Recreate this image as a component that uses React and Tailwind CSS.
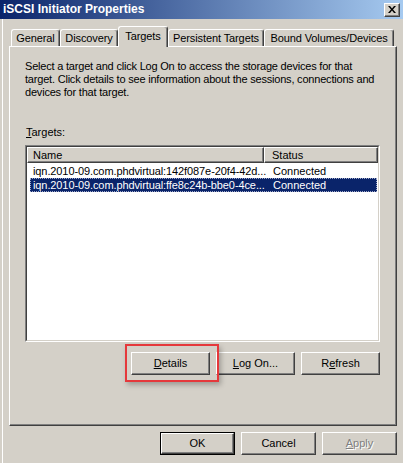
const raised =
  'border border-t-white border-l-white border-r-[#404040] border-b-[#404040] shadow-[inset_-1px_-1px_0_#808080]'

const Tab = ({ label, width, selected }) => (
  <div
    className={
      selected
        ? `relative z-10 -mb-px flex h-[21px] items-start justify-center rounded-t-[3px] border-t border-l border-r border-t-white border-l-white border-r-[#404040] bg-[#d4d0c8] pt-[3px] shadow-[inset_-1px_0_0_#808080]`
        : `flex h-[17px] items-center justify-center rounded-t-[3px] border-t border-l border-r border-t-white border-l-white border-r-[#404040] bg-[#d4d0c8] shadow-[inset_-1px_0_0_#808080]`
    }
    style={{ width }}
  >
    {label}
  </div>
)

const Button = ({ children, width = 79, isDefault, disabled }) => (
  <div className={`h-[23px] bg-[#d4d0c8] ${isDefault ? 'border border-black' : ''}`} style={{ width }}>
    <div className={`flex h-full w-full items-center justify-center ${raised}`}>
      <span className={disabled ? 'text-[#808080] [text-shadow:1px_1px_0_#fff]' : ''}>{children}</span>
    </div>
  </div>
)

const CloseIcon = () => (
  <svg width="8" height="7" viewBox="0 0 8 7">
    <path d="M0 0h2l2 2.5L6 0h2L5 3.5 8 7H6L4 4.5 2 7H0l3-3.5z" fill="#000" />
  </svg>
)

const rows = [
  { name: 'iqn.2010-09.com.phdvirtual:142f087e-20f4-42d...', status: 'Connected' },
  { name: 'iqn.2010-09.com.phdvirtual:ffe8c24b-bbe0-4ce...', status: 'Connected', selected: true },
]

export default function App() {
  return (
    <div className="h-[463px] w-[403px] overflow-hidden bg-[#d4d0c8] font-['Liberation_Sans',Arial,sans-serif] text-[11px] leading-[13px] text-black">
      {/* title bar */}
      <div className="flex h-[19px] items-center justify-between bg-[linear-gradient(to_right,#0a246a,#a6caf0)] pl-[3px] pr-[3px]">
        <span className="text-[12px] font-bold text-white">iSCSI Initiator Properties</span>
        <div className={`flex h-[14px] w-[16px] items-center justify-center bg-[#d4d0c8] ${raised}`}>
          <CloseIcon />
        </div>
      </div>

      <div className="pl-[2px]">
        <div className="h-[444px] border-l border-white pl-[6px]">
          {/* tabs */}
          <div className="flex items-end pl-[2px] pt-[7px] tracking-[-0.1px]">
            <Tab label="General" width={49} />
            <Tab label="Discovery" width={58} />
            <Tab label="Targets" width={50} selected />
            <Tab label="Persistent Targets" width={96} />
            <Tab label="Bound Volumes/Devices" width={130} />
          </div>

          {/* panel */}
          <div className="h-[380px] w-[388px] border border-t-white border-l-white border-r-[#404040] border-b-[#404040] shadow-[inset_-1px_-1px_0_#808080] pl-[15px] pt-[13px]">
            <p className="tracking-[-0.2px]">
              Select a target and click Log On to access the storage devices for that
              <br />
              target. Click details to see information about the sessions, connections and
              <br />
              devices for that target.
            </p>

            <div className="mt-[27px] pl-px">
              <span className="underline">T</span>argets:
            </div>

            <div className="mt-[6px] h-[197px] w-[355px] border border-t-[#808080] border-l-[#808080] border-r-white border-b-white">
              <div className="h-full w-full border border-t-[#404040] border-l-[#404040] border-r-[#d4d0c8] border-b-[#d4d0c8] bg-white">
                <div className="flex h-[16px]">
                  <div className={`flex w-[237px] items-center bg-[#d4d0c8] pl-[5px] ${raised}`}>Name</div>
                  <div className={`flex flex-1 items-center bg-[#d4d0c8] pl-[7px] ${raised}`}>Status</div>
                </div>
                <div className="pt-px">
                  {rows.map((r) => (
                    <div
                      key={r.name}
                      className={`ml-[3px] mr-px flex h-[14px] items-center ${
                        r.selected ? 'border border-dotted border-[#a0a8c8] bg-[#0a246a] text-white' : 'border border-transparent'
                      }`}
                    >
                      <div className="w-[239px] whitespace-nowrap pl-[2px] tracking-[-0.1px]">{r.name}</div>
                      <div className="pl-[3px]">{r.status}</div>
                    </div>
                  ))}
                </div>
              </div>
            </div>

            <div className="mt-[10px] flex w-[355px] justify-end gap-[6px]">
              <div className="relative">
                <Button>
                  <span className="underline">D</span>etails
                </Button>
                <div className="absolute left-[-6px] top-[-8px] h-[38px] w-[94px] border-2 border-[#e5383b] shadow-[2px_3px_5px_rgba(0,0,0,0.25)]" />
              </div>
              <Button>
                <span className="underline">L</span>og On...
              </Button>
              <Button>
                R<span className="underline">e</span>fresh
              </Button>
            </div>
          </div>

          {/* dialog buttons */}
          <div className="mt-[6px] flex justify-end gap-[6px] pr-[6px]">
            <Button width={75} isDefault>OK</Button>
            <Button width={75}>Cancel</Button>
            <Button width={75} disabled>
              <span className="underline">A</span>pply
            </Button>
          </div>
        </div>
      </div>
    </div>
  )
}
